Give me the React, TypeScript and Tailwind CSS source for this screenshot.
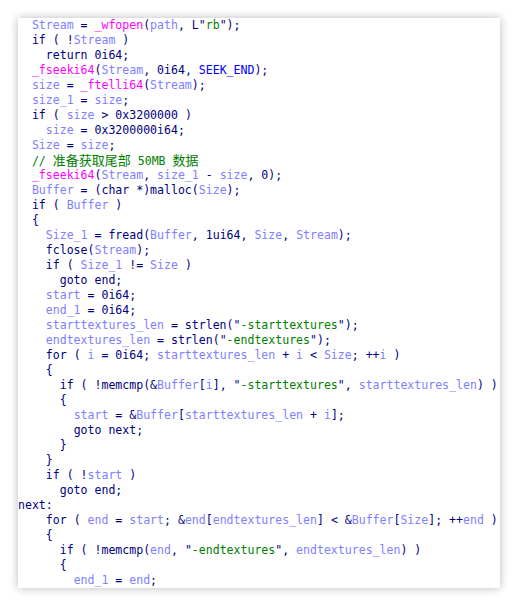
const code = `  Stream = _wfopen(path, L"rb");
  if ( !Stream )
    return 0i64;
  _fseeki64(Stream, 0i64, SEEK_END);
  size = _ftelli64(Stream);
  size_1 = size;
  if ( size > 0x3200000 )
    size = 0x3200000i64;
  Size = size;
  // 准备获取尾部 50MB 数据
  _fseeki64(Stream, size_1 - size, 0);
  Buffer = (char *)malloc(Size);
  if ( Buffer )
  {
    Size_1 = fread(Buffer, 1ui64, Size, Stream);
    fclose(Stream);
    if ( Size_1 != Size )
      goto end;
    start = 0i64;
    end_1 = 0i64;
    starttextures_len = strlen("-starttextures");
    endtextures_len = strlen("-endtextures");
    for ( i = 0i64; starttextures_len + i < Size; ++i )
    {
      if ( !memcmp(&Buffer[i], "-starttextures", starttextures_len) )
      {
        start = &Buffer[starttextures_len + i];
        goto next;
      }
    }
    if ( !start )
      goto end;
next:
    for ( end = start; &end[endtextures_len] < &Buffer[Size]; ++end )
    {
      if ( !memcmp(end, "-endtextures", endtextures_len) )
      {
        end_1 = end;`;

const variables = new Set([
  "Stream", "path", "size", "size_1", "Size", "Buffer", "Size_1",
  "start", "end_1", "starttextures_len", "endtextures_len", "i", "end",
]);
const imports = new Set(["_wfopen", "_fseeki64", "_ftelli64"]);

type Token = { text: string; cls: string };

function tokenize(line: string): Token[] {
  const out: Token[] = [];
  const re = /("[^"]*")|(\/\/.*)|([A-Za-z_]\w*)|(\d\w*)|(\s+)|(.)/g;
  let prev = "";
  let m: RegExpExecArray | null;
  while ((m = re.exec(line))) {
    const [t, str, comment, ident] = m;
    if (str) {
      out.push({ text: '"', cls: "text-[#000080]" });
      out.push({ text: str.slice(1, -1), cls: "text-[#008000]" });
      out.push({ text: '"', cls: "text-[#000080]" });
    } else if (comment) {
      // CJK runs are set wider so they take two columns each, as in the editor
      for (const part of comment.split(/([\u4e00-\u9fff]+)/)) {
        if (!part) continue;
        const cjk = /[\u4e00-\u9fff]/.test(part);
        out.push({ text: part, cls: cjk ? "text-[#008000] text-[13px]" : "text-[#008000]" });
      }
    } else if (ident) {
      let cls = "text-[#000080]";
      if (imports.has(ident)) cls = "text-[#ff00ff]";
      else if (ident === "SEEK_END") cls = "text-[#0000ff]";
      else if (variables.has(ident) && prev !== "goto" && !line.startsWith("next:")) cls = "text-[#8080ff]";
      out.push({ text: ident, cls });
      prev = ident;
    } else {
      out.push({ text: t, cls: "text-[#000080]" });
    }
  }
  return out;
}

export default function App() {
  const lines = code.split("\n");

  return (
    <div className="h-[606px] w-[518px] bg-white pl-[18px] pt-[18px]">
      <div
        className="h-[570px] w-[482px] overflow-hidden bg-white shadow-[0_0_9px_rgba(0,0,0,0.28)]"
        style={{ fontFamily: '"DejaVu Sans Mono", "Noto Sans CJK SC", monospace' }}
      >
        {lines.map((line, idx) => (
          <div key={idx} className="h-[15px] whitespace-pre text-[11.55px] leading-[15px]">
            {tokenize(line).map((tok, j) => (
              <span key={j} className={tok.cls}>
                {tok.text}
              </span>
            ))}
          </div>
        ))}
      </div>
    </div>
  );
}
